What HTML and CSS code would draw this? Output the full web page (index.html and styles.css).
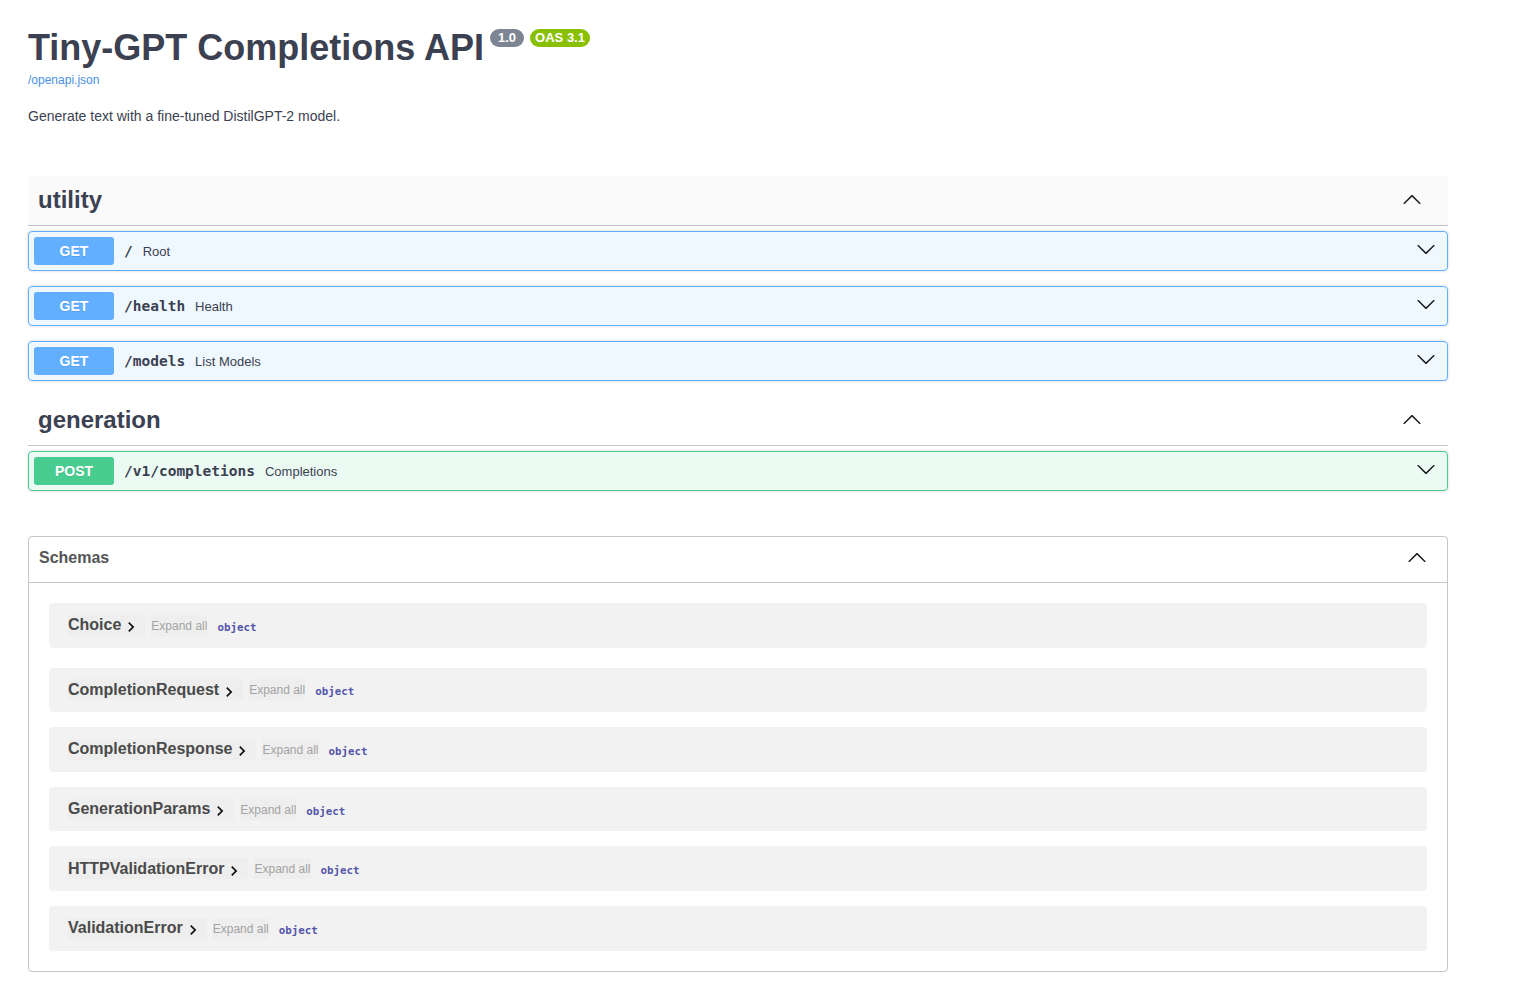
FILE: index.html
```html
<!DOCTYPE html>
<html lang="en">
<head>
<meta charset="utf-8">
<title>Tiny-GPT Completions API</title>
<link rel="stylesheet" href="styles.css">
</head>
<body>
<svg class="defs" width="0" height="0" aria-hidden="true">
  <defs>
    <symbol id="arrow-up" viewBox="0 0 20 20"><path d="M17.418 14.908c.272.268.709.268.979 0s.271-.701 0-.969l-7.908-7.83c-.27-.268-.707-.268-.979 0l-7.908 7.830c-.27.268-.27.701 0 .969.271.268.709.268.979 0L10 7.771l7.418 7.137z"/></symbol>
    <symbol id="arrow-down" viewBox="0 0 20 20"><path d="M17.418 6.109c.272-.268.709-.268.979 0s.271.701 0 .969l-7.908 7.83c-.27.268-.707.268-.979 0l-7.908-7.83c-.27-.268-.27-.701 0-.969.271-.268.709-.268.979 0L10 13.25l7.418-7.141z"/></symbol>
    <symbol id="chev-right" viewBox="0 0 24 24"><path d="M10 6 8.59 7.41 13.17 12l-4.58 4.59L10 18l6-6z"/></symbol>
  </defs>
</svg>
<div class="wrapper">
  <section class="info">
    <h2 class="title">Tiny-GPT Completions API<span class="badge ver">1.0</span><span class="badge oas">OAS 3.1</span></h2>
    <a class="url" href="#">/openapi.json</a>
    <p class="desc">Generate text with a fine-tuned DistilGPT-2 model.</p>
  </section>

  <section class="tag-section first">
    <h3 class="tag hover"><span class="tag-name">utility</span><svg class="arrow tag-arrow"><use href="#arrow-up"/></svg></h3>
    <div class="op get">
      <div class="op-summary"><span class="method">GET</span><span class="path">/</span><span class="op-desc">Root</span><svg class="arrow op-arrow"><use href="#arrow-down"/></svg></div>
    </div>
    <div class="op get">
      <div class="op-summary"><span class="method">GET</span><span class="path">/health</span><span class="op-desc">Health</span><svg class="arrow op-arrow"><use href="#arrow-down"/></svg></div>
    </div>
    <div class="op get">
      <div class="op-summary"><span class="method">GET</span><span class="path">/models</span><span class="op-desc">List Models</span><svg class="arrow op-arrow"><use href="#arrow-down"/></svg></div>
    </div>
  </section>

  <section class="tag-section">
    <h3 class="tag"><span class="tag-name">generation</span><svg class="arrow tag-arrow"><use href="#arrow-up"/></svg></h3>
    <div class="op post">
      <div class="op-summary"><span class="method">POST</span><span class="path">/v1/completions</span><span class="op-desc">Completions</span><svg class="arrow op-arrow"><use href="#arrow-down"/></svg></div>
    </div>
  </section>

  <section class="models">
    <h4 class="models-head"><span class="models-title">Schemas</span><svg class="arrow models-arrow"><use href="#arrow-up"/></svg></h4>
    <div class="model-container first"><div class="model-row"><span class="model-btn"><span class="model-title">Choice</span><svg class="chev"><use href="#chev-right"/></svg></span><span class="expand">Expand all</span><span class="prop-type">object</span></div></div>
    <div class="model-container"><div class="model-row"><span class="model-btn"><span class="model-title">CompletionRequest</span><svg class="chev"><use href="#chev-right"/></svg></span><span class="expand">Expand all</span><span class="prop-type">object</span></div></div>
    <div class="model-container"><div class="model-row"><span class="model-btn"><span class="model-title">CompletionResponse</span><svg class="chev"><use href="#chev-right"/></svg></span><span class="expand">Expand all</span><span class="prop-type">object</span></div></div>
    <div class="model-container"><div class="model-row"><span class="model-btn"><span class="model-title">GenerationParams</span><svg class="chev"><use href="#chev-right"/></svg></span><span class="expand">Expand all</span><span class="prop-type">object</span></div></div>
    <div class="model-container"><div class="model-row"><span class="model-btn"><span class="model-title">HTTPValidationError</span><svg class="chev"><use href="#chev-right"/></svg></span><span class="expand">Expand all</span><span class="prop-type">object</span></div></div>
    <div class="model-container last"><div class="model-row"><span class="model-btn"><span class="model-title">ValidationError</span><svg class="chev"><use href="#chev-right"/></svg></span><span class="expand">Expand all</span><span class="prop-type">object</span></div></div>
  </section>
</div>
</body>
</html>
```

FILE: styles.css
```css
html, body {
  background: #fff;
}
body {
  margin: 8px;
  font-family: "Liberation Sans", Arial, sans-serif;
  color: #3b4151;
}
.defs {
  display: block;
  width: 0;
  height: 0;
  overflow: hidden;
}
.wrapper {
  width: 1420px;
  padding: 0 20px;
  display: flex;
  flex-direction: column;
}

/* info */
.info {
  padding-top: 20px;
  display: flex;
  flex-direction: column;
}
.title {
  margin: 0;
  font-size: 36px;
  line-height: 40px;
  font-weight: 700;
  color: #3b4151;
}
.badge {
  display: inline-block;
  vertical-align: top;
  margin: 1px 0 0 6px;
  padding: 2px 7px;
  font-size: 13px;
  line-height: 14px;
  font-weight: 700;
  color: #fff;
  border-radius: 57px;
}
.badge.ver {
  background: #7d8492;
  padding: 2px 8px;
}
.badge.oas {
  background: #89bf04;
  padding: 2px 5px;
}
.url {
  display: block;
  align-self: flex-start;
  margin-top: 5px;
  font-size: 12px;
  line-height: 14px;
  color: #4990e2;
  text-decoration: none;
}
.desc {
  margin: 21px 0 0;
  font-size: 14px;
  line-height: 16px;
  color: #3b4151;
}

/* tags */
.tag-section {
  display: flex;
  flex-direction: column;
}
.tag-section.first {
  margin-top: 52px;
}
.tag {
  display: flex;
  align-items: center;
  margin: 0 0 5px;
  padding: 9px 20px 11px 10px;
  border-bottom: 1px solid rgba(59, 65, 81, .3);
  font-size: 24px;
  line-height: 29px;
  font-weight: 700;
  color: #3b4151;
}
.tag.hover {
  background: rgba(0, 0, 0, .02);
}
.tag-name {
  flex: 1;
}
.arrow {
  width: 20px;
  height: 20px;
  flex: none;
  fill: #1b1b1b;
}
.tag-arrow {
  margin-right: 6px;
  margin-bottom: 2px;
}

/* operations */
.op {
  margin: 0 0 15px;
  border: 1px solid #61affe;
  border-radius: 4px;
  background: rgba(97, 175, 254, .1);
  box-shadow: 0 0 3px rgba(0, 0, 0, .19);
}
.op.post {
  border-color: #49cc90;
  background: rgba(73, 204, 144, .1);
}
.op-summary {
  display: flex;
  align-items: center;
  padding: 5px;
}
.method {
  width: 80px;
  flex: none;
  padding: 6px 0;
  border-radius: 3px;
  background: #61affe;
  color: #fff;
  font-size: 14px;
  line-height: 16px;
  font-weight: 700;
  text-align: center;
  text-shadow: 0 1px 0 rgba(0, 0, 0, .1);
}
.op.post .method {
  background: #49cc90;
}
.path {
  padding: 0 10px;
  font-family: "DejaVu Sans Mono", "Liberation Mono", monospace;
  font-size: 14.5px;
  font-weight: 700;
  color: #3b4151;
}
.op-desc {
  flex: 1;
  font-size: 13px;
  color: #3b4151;
}
.op-arrow {
  margin-right: 6px;
  margin-bottom: 5px;
}

/* models */
.models {
  margin-top: 30px;
  border: 1px solid rgba(59, 65, 81, .3);
  border-radius: 4px;
  padding-bottom: 20px;
  display: flex;
  flex-direction: column;
}
.models-head {
  display: flex;
  align-items: center;
  margin: 0;
  padding: 8px 20px 12px 10px;
  border-bottom: 1px solid rgba(59, 65, 81, .3);
  font-size: 16px;
  line-height: 25px;
  font-weight: 700;
  color: #555;
}
.models-title {
  flex: 1;
}
.models-arrow {
  margin-bottom: 2px;
}
.model-container {
  margin: 0 20px 15px;
  border-radius: 4px;
  background: rgba(0, 0, 0, .05);
}
.model-container.first {
  margin: 20px;
}
.model-container.last {
  margin-bottom: 0;
}
.model-row {
  display: flex;
  align-items: center;
  height: 44.6px;
  padding-left: 19px;
}
.model-btn {
  display: flex;
  align-items: center;
  height: 21px;
  padding-right: 4px;
  background: rgba(0, 0, 0, .015);
}
.model-title {
  font-size: 16px;
  font-weight: 700;
  color: #4a4a4a;
}
.chev {
  width: 20px;
  height: 20px;
  margin-top: 4px;
  fill: #111;
}
.expand {
  margin-left: 6px;
  height: 21px;
  line-height: 23px;
  font-size: 12px;
  color: #a3a3a3;
  background: rgba(0, 0, 0, .015);
}
.prop-type {
  margin-left: 10px;
  margin-top: 4px;
  font-family: "DejaVu Sans Mono", "Liberation Mono", monospace;
  font-size: 10.8px;
  font-weight: 600;
  color: #55a;
}
```
